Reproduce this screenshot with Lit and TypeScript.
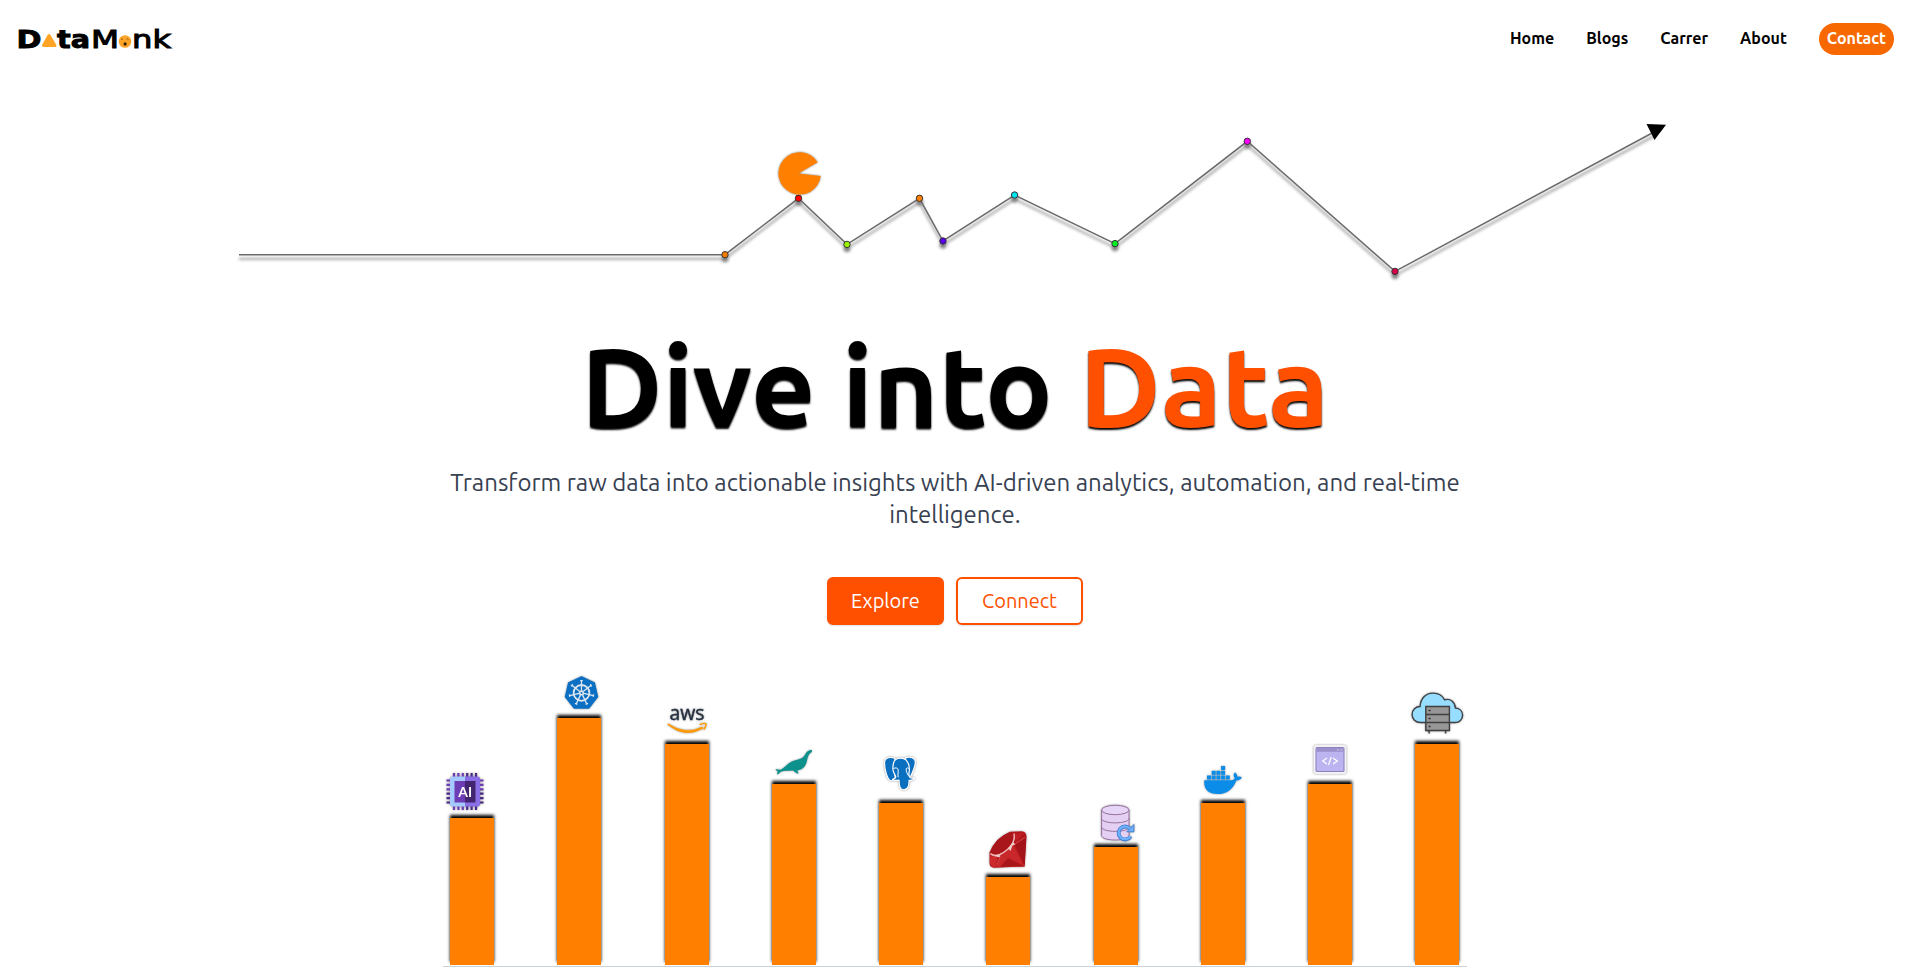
import { LitElement, html, svg, css } from "lit";
import { customElement } from "lit/decorators.js";

const POINTS: [number, number, string][] = [
  [725, 254.7, "#f57c00"],
  [798.5, 198.3, "#f00"],
  [847, 244.4, "#9cf500"],
  [919.5, 198.3, "#ff8000"],
  [943, 241, "#5a00f0"],
  [1014.6, 195, "#00e5f0"],
  [1115, 243.6, "#00f020"],
  [1247.3, 141.3, "#f0f"],
  [1395, 271.4, "#d8004c"],
];

const spokes = [0, 1, 2, 3, 4, 5, 6].map((i) => (i * 360) / 7);

const ai = svg`
  ${[0, 1, 2, 3, 4, 5].map(
    (i) => svg`<path d="M${12 + i * 4.4} 5v37M4.5 ${12.5 + i * 4.4}h37" stroke=${i > 2 ? "#4b2a86" : "#6d3cb4"} stroke-width="2.2"/>`
  )}
  <path d="M23 8.500H10.500q-2.500 0-2.500 2.500v25q0 2.500 2.500 2.500H23z" fill="#a4c8ff"/>
  <path d="M23 8.500H35.500q2.500 0 2.500 2.500v25q0 2.500-2.500 2.500H23z" fill="#8a6ee6"/>
  <path d="M12.500 13H23v21.500H12.500z" fill="#6d3cb4"/>
  <path d="M23 13h10.500v21.500H23z" fill="#43246f"/>
  <text x="16.300" y="29.300" class="ai" textLength="13.800" lengthAdjust="spacingAndGlyphs">AI</text>`;

const kube = svg`
  <g transform="translate(32.500 24.900)">
    <path d="M0-16 12.800-10 16 4 7.200 15.200H-7.200L-16 4-12.800-10z" fill="#0b6fc4" stroke="#0b6fc4" stroke-width="1.500" stroke-linejoin="round"/>
    <circle r="7.900" fill="none" stroke="#dfe7ee" stroke-width="1.800"/>
    ${spokes.map((a) => svg`<path d="M0-2.500V-12M-1.300-12.200h2.600" transform="rotate(${a})" stroke="#dfe7ee" stroke-width="1.300"/>`)}
    <circle r="2.600" fill="#dfe7ee"/><circle r="1" fill="#0b6fc4"/>
  </g>`;

const aws = svg`
  <text x="12.500" y="26.300" class="aws" textLength="35" lengthAdjust="spacingAndGlyphs">aws</text>
  <path d="M11.300 29.800q17 11.500 34 3.200l.8 1.300q-18 10.500-35.300-3.600z" fill="#f90" stroke="#f90" stroke-width=".6"/>
  <path d="M42.500 30.600q6-1.900 6.500-.5t-2.300 5.600" fill="none" stroke="#f90" stroke-width="1.400"/>`;

const seal = svg`
  <path d="M48 16.500c-1-.9-2.500 0-3.800.6-2.700 1.200-2.800 4.400-5.400 6.400-3.200 2.400-7.500 2-11.500 4.200-4.500 2.500-7 6.200-10.300 7.700-2 .8-3.500-.6-5.600.2.800 1.400 2.400 1.500 2.300 2.300-.1.900-1 1.500-.700 2.500 2.300-.2 2.400-2.100 4.500-2.900 3-1.100 7.500-.5 11-1 1.600.3 3.600 3 5.900 3.300.1-1.500-.9-2.100-1.200-3.200 2.400-.5 4.900-1.500 6.700-3.300 3.600-3.700 2.800-9.800 5.500-13.400 1-1.300 3-1.600 2.600-3.400z" fill="#0d918d"/>`;

const postgres = svg`
  <g fill="#0b6fc0" stroke="#fff" stroke-width="1.200" stroke-linejoin="round">
    <path d="M24 5.500c-4-2.300-10.500-1.200-10.500 4.500 0 5.500 2.500 15.500 5.200 17.300 1.800 1 4.300-.3 5.500-2z"/>
    <path d="M34.500 4.800c4.300-1.800 10-.2 9.900 4.300-.2 5.300-3.400 10.900-4.400 13.900l-4.500 1z"/>
    <path d="M23.500 7.500c3-3.300 9-3 11.700-.3 3.200 3.500 3.400 9.200 2.800 12.800-.3 2.500 0 4 1.500 4.800 1.500.6 3 0 4.300-.1-.3 2-3.200 3-5.800 2.600.2 4-.5 9.500-5 9.500s-4.800-4.500-5-9.700c-2 .5-4.600.5-6.400-.7 1.200-1 3.300-1 3.200-2.500-.7-2.500-3-4.300-3-8.300 0-2.800.7-6.200 1.700-8.100z"/>
    <path d="M22.500 15.500c2-1 4-.7 4.500.8.700 2.500-.5 5 .2 8M38 15.500c-1-1-2.600-.6-2.800.4-.3 2 1 4.500 2.200 6.800" fill="none" stroke-width="1"/>
  </g>`;

const ruby = svg`
  <path d="M32 4.700 43.500 4.300q5 .2 5 5.500L46.700 39.500 16 40.700q-4.500-.3-4.500-5V25.500Q17 11 32 4.700z" fill="#b3161b"/>
  <path d="M22 29.300 35.500 18 46.500 39.500 19 40.300z" fill="#c9282a"/>
  <path d="M37.500 18 48 10 46.600 38z" fill="#a3141a"/>
  <path d="M36.500 7 46 6 37.500 15z" fill="#bd1f23"/>
  <path d="M12 29 19.500 30 18 40.200q-6 0-6-5z" fill="#cc2b2e"/>
  <path d="M30 31 46 39 22 40z" fill="#a9171b"/>
  <path d="M13.500 23Q18 11 29.500 6.500 36 5 35 10.500 33 17.500 27 22.500 20 28 15 27.300 12 26.500 13.500 23z" fill="#a9161b"/>
  <path d="M12.300 26.700q4.500 2.800 9.500.8Q31 23 35 15.500 37 10.500 36 6.500" fill="none" stroke="#efc0bc" stroke-width="1.400"/>
  <path d="M12.500 28.500 22.500 28.300 21.500 30.300z" fill="#f3d2d0"/>
  <path d="M35 15 37.500 17.500 34.500 18.500 32.500 24 30 21.500z" fill="#f0cbc8"/>
  <path d="M37.500 16.500 47 10.500M22 29.500l-3 9" fill="none" stroke="#d95f5f" stroke-width=".7"/>`;

const database = svg`
  <g transform="translate(-.4 0)">
  <path d="M16 13v25.500c0 6 27.400 6 27.400 0V13z" fill="#e3d0f3" stroke="#98709f" stroke-width="1"/>
  <ellipse cx="29.700" cy="13" rx="13.700" ry="4.700" fill="#e6d5f6" stroke="#98709f" stroke-width="1"/>
  <path d="M16 21.500c0 5.800 27.400 5.800 27.400 0M16 30c0 5.800 27.400 5.800 27.400 0" fill="none" stroke="#98709f" stroke-width="1"/>
  <path d="M45 39.500a6.500 6.500 0 1 1-.8-8" fill="none" stroke="#3f7ccc" stroke-width="3.900"/>
  <path d="M48.300 27.500v7.300h-7.200z" fill="#6db1ff" stroke="#3f7ccc" stroke-width=".9"/>
  <path d="M44.800 39.300a6.400 6.400 0 1 1-.6-7.800" fill="none" stroke="#6db1ff" stroke-width="2.300"/>
  </g>`;

const docker = svg`
  <path d="M11.300 27.300H38.500c2.200 0 3.200-1 3.200-2.200-1.700-2-1-4.500.1-5.600 1.700 1 2.500 2.500 2.500 4.200 1.800-.5 3.500-.1 4.500.9-.9 2-3 3-5.500 2.800C40 36.500 33.500 41 24.500 41 15 41 10.500 36 11.300 27.300z" fill="#0c8ce9"/>
  ${[[14, 22.5], [18.7, 22.5], [23.4, 22.5], [28.1, 22.5], [32.8, 22.5], [18.7, 17.8], [23.4, 17.8], [28.1, 17.8], [28.1, 13]].map(
    ([x, y]) => svg`<rect x=${x} y=${y} width="4" height="4" fill="#0c8ce9"/>`
  )}`;

const code = svg`
  <rect x="13.500" y="11" width="33" height="29" rx="2.500" fill="#f3f1f5"/>
  <rect x="16" y="13.500" width="28" height="24" rx="1" fill="#bcb4f0" stroke="#8f83be" stroke-width="1.100"/>
  <path d="M16.500 14h27v3.800h-27z" fill="#9b90cc"/>
  <path d="M37 15.900h1.700M40.500 15.900h1.700" stroke="#c9c2ee" stroke-width="1.200"/>
  <path d="m27 24-4.300 3 4.300 3M33 24l4.300 3-4.300 3M31.200 23l-2.700 8" fill="none" stroke="#fff" stroke-width="1.200"/>`;

const cloud = svg`
  <g transform="translate(-.4 0)">
  <path d="M14 28.500c-5 0-8.500-3.500-8.500-8 0-4.800 3.800-8 8-8C14 4.500 19-.900 26.500-.900 32-.9 36 2 38 5.800c5.500-1.800 10.500 2.200 10.800 8.200 4 .3 7.200 3 7.200 7.200 0 4.300-3.200 7.300-7.500 7.300z" fill="#97ddff" stroke="#3f4247" stroke-width="1.400"/>
  <path d="M22.500 36v3.500M39 36v3.500" stroke="#444" stroke-width="1.500"/>
  <path d="M19.200 12.500h23.600v24H19.200z" fill="#979797" stroke="#3f3f3f" stroke-width="1.400"/>
  <path d="M19.200 20.500h23.600M19.200 28.500h23.600" stroke="#3f3f3f" stroke-width="1.400"/>
  <path d="M22 16.500h2M22 24.500h2M22 32.500h2" stroke="#333" stroke-width="1.500"/>
  </g>`;

const BARS = [
  { icon: ai, h: 147.5 },
  { icon: kube, h: 247 },
  { icon: aws, h: 221.5 },
  { icon: seal, h: 181 },
  { icon: postgres, h: 162 },
  { icon: ruby, h: 88.5 },
  { icon: database, h: 118 },
  { icon: docker, h: 162 },
  { icon: code, h: 181 },
  { icon: cloud, h: 221.5 },
];

@customElement("app-root")
export class AppRoot extends LitElement {
  static styles = css`
    :host { display: block; height: 967px; overflow: hidden; background: #fff; font-family: Ubuntu, "Noto Sans", sans-serif; color: #000; }
    * { box-sizing: border-box; }
    svg { display: block; overflow: visible; }
    header { display: flex; justify-content: space-between; align-items: center; height: 78px; padding: 0 25px 0 18px; }
    nav { display: flex; align-items: center; gap: 32px; }
    nav a { font-size: 16px; font-weight: 700; height: 32px; line-height: 30px; white-space: nowrap; }
    .contact { padding: 0 8px; border-radius: 16px; background: #f76800; color: #fff; }
    .wide { font: 700 24.500px "DejaVu Sans", sans-serif; stroke: #000; stroke-width: .9px; }
    .thin { font: 400 24.500px "DejaVu Sans", sans-serif; stroke: #000; stroke-width: 1px; }
    .shadow { filter: drop-shadow(0 4px 1.500px rgba(0, 0, 0, .5)); }
    .pac { filter: drop-shadow(0 0 1px rgba(0, 0, 0, .5)); }
    h1 { margin: 0 9px 0 0; padding-top: 7px; height: 145px; line-height: 138px; font-size: 112px; font-weight: 700; text-align: center; white-space: nowrap; text-shadow: 0 2px 2px #000; }
    h1 span { color: #ff5000; }
    .lead { margin: 12px 0 0 443px; width: 1024px; font-size: 24px; line-height: 32px; font-weight: 400; color: #374151; text-align: center; }
    .actions { display: flex; justify-content: center; gap: 12px; margin: 46px 9px 0 0; }
    .btn { height: 48px; line-height: 44px; border-radius: 6px; font-size: 20px; font-weight: 400; text-align: center; border: 2px solid #ff5000; box-shadow: 0 1px 2px rgba(0, 0, 0, .12); }
    .fill { width: 117px; background: #ff5000; color: #fff; }
    .line { width: 127px; color: #ff5000; background: #fff; }
    .chart { display: flex; justify-content: space-between; align-items: flex-end; width: 1024px; height: 342px; margin: 0 0 0 443px; padding: 0 7.500px 1px 7px; border-bottom: 1px solid #cbd2da; }
    .col { display: flex; flex-direction: column; width: 44px; }
    .col svg { margin: 0 -8px; width: 60px; height: 50px; filter: drop-shadow(0 0 1px rgba(0, 0, 0, .4)); position: relative; }
    .bar { background: #ff8000; box-shadow: 0 -3px 3px #000; }
    .ai { font: 700 12.500px Lato, sans-serif; fill: #fff; }
    .aws { font: 400 20px "Open Sans", sans-serif; fill: #232f3e; stroke: #232f3e; stroke-width: .4px; }
  `;

  render() {
    const line = "M239 254.700L" + POINTS.map(([x, y]) => `${x} ${y}`).join("L") + "L1654 132";
    return html`
      <header>
        <svg width="155" height="24" viewBox="18 27 155 24">
          <text class="wide" x="16.500" y="47.500" textLength="25" lengthAdjust="spacingAndGlyphs">D</text>
          <path d="M49 35.500 43.500 45.500h11.500z" fill="#ffa426" stroke="#ffa426" stroke-width="3" stroke-linejoin="round"/>
          <text class="wide" x="57" y="47.500" textLength="33" lengthAdjust="spacingAndGlyphs">ta</text>
          <text class="thin" x="91" y="47.500" textLength="28" lengthAdjust="spacingAndGlyphs">M</text>
          <circle cx="125" cy="41.500" r="6.300" fill="#ffa426"/>
          <path d="M121 39.500q1-1.500 2 0M126.500 39.500q1-1.500 2 0" fill="none" stroke="#5b3c10" stroke-width=".7"/>
          <rect x="123.700" y="42.500" width="2.800" height="3" rx="1" fill="#261806"/>
          <text class="thin" x="132" y="47.500" textLength="39" lengthAdjust="spacingAndGlyphs">nk</text>
        </svg>
        <nav>
          <a>Home</a><a>Blogs</a><a>Carrer</a><a>About</a><a class="contact">Contact</a>
        </nav>
      </header>
      <svg width="1919" height="232" viewBox="0 78 1919 232">
        <g class="shadow">
          <path d=${line} fill="none" stroke="#6a6a6a" stroke-width="1.500"/>
          ${POINTS.map(([x, y, c]) => svg`<circle cx=${x} cy=${y} r="3.200" fill=${c} stroke="#333" stroke-width="1"/>`)}
        </g>
        <path d="M1646.500 124 1666 124.800 1654.500 140z"/>
        <path class="pac" d="M798.500 173.500 817.700 162.300A21.200 21.200 0 1 0 820.700 176z" fill="#ff8000"/>
      </svg>
      <h1>Dive into <span>Data</span></h1>
      <p class="lead">Transform raw data into actionable insights with AI-driven analytics, automation, and real-time intelligence.</p>
      <div class="actions"><div class="btn fill">Explore</div><div class="btn line">Connect</div></div>
      <section class="chart">
        ${BARS.map((b) => html`<div class="col"><svg viewBox="0 0 60 50">${b.icon}</svg><div class="bar" style="height:${b.h}px"></div></div>`)}
      </section>
    `;
  }
}
